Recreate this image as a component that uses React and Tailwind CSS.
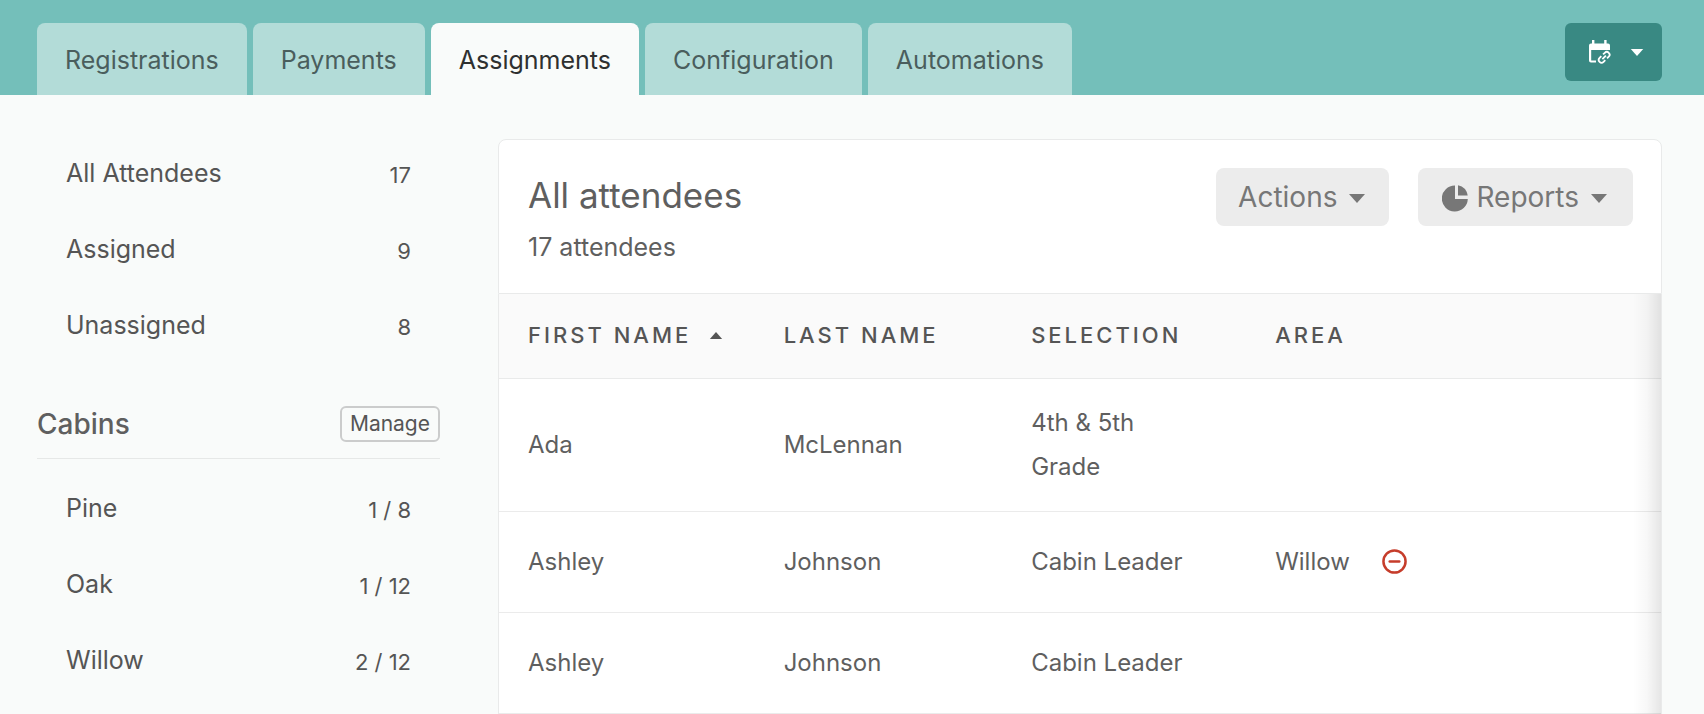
import React from 'react';

const tabs = ['Registrations', 'Payments', 'Assignments', 'Configuration', 'Automations'];

const groups = [
  { name: 'All Attendees', count: '17' },
  { name: 'Assigned', count: '9' },
  { name: 'Unassigned', count: '8' },
];

const cabins = [
  { name: 'Pine', count: '1 / 8' },
  { name: 'Oak', count: '1 / 12' },
  { name: 'Willow', count: '2 / 12' },
];

const attendees = [
  { first: 'Ada', last: 'McLennan', selection: '4th & 5th Grade', area: '' },
  { first: 'Ashley', last: 'Johnson', selection: 'Cabin Leader', area: 'Willow' },
  { first: 'Ashley', last: 'Johnson', selection: 'Cabin Leader', area: '' },
];

function CaretDown({ className }) {
  return (
    <svg viewBox="0 0 16 9" className={className} fill="currentColor" aria-hidden="true">
      <path d="M0 0h16L8 9z" />
    </svg>
  );
}

function CaretUp({ className }) {
  return (
    <svg viewBox="0 0 14 8" className={className} fill="currentColor" aria-hidden="true">
      <path d="M0 8h14L7 0z" />
    </svg>
  );
}

function PieIcon() {
  return (
    <svg viewBox="0 0 26 27" className="h-[27px] w-[26px]" fill="currentColor" aria-hidden="true">
      <path d="M13 .5A13 13 0 1 0 25.8 14H13z" />
      <path d="M16 .3v10.2h9.7A12.5 12.5 0 0 0 16 .3z" />
    </svg>
  );
}

function CalendarLinkIcon() {
  return (
    <svg viewBox="0 0 22 24" className="h-6 w-[22px]" fill="none" stroke="currentColor" aria-hidden="true">
      <path d="M3 0h2.4v3.4h9.8V0h2.4v3.4H19a2 2 0 0 1 2 2V10H2.2v10.6H7v2H2a2 2 0 0 1-2-2V5.4a2 2 0 0 1 2-2h1z" fill="currentColor" stroke="none" />
      <g strokeWidth="1.8" transform="rotate(-45 15 17.5)">
        <path d="M14 14.7h-2.4a2.8 2.8 0 0 0 0 5.6H14" />
        <path d="M16.5 14.7h2.4a2.8 2.8 0 0 1 0 5.6h-2.4" />
        <path d="M12.7 17.5h5" />
      </g>
    </svg>
  );
}

function MinusCircleIcon() {
  return (
    <svg viewBox="0 0 26 26" className="size-[25px]" fill="none" stroke="currentColor" strokeWidth="2.6" aria-hidden="true">
      <circle cx="13" cy="13" r="11.5" />
      <path d="M8 13h10" strokeLinecap="round" />
    </svg>
  );
}

function NavList({ items, label }) {
  return (
    <nav aria-label={label}>
      <ul>
        {items.map((item) => (
          <li key={item.name}>
            <a href="#" className="flex h-[76px] items-center justify-between px-[29px] text-[25px] text-[#555]">
              <span>{item.name}</span>
              <span className="pt-1 text-[22px]">{item.count}</span>
            </a>
          </li>
        ))}
      </ul>
    </nav>
  );
}

export default function App() {
  return (
    <div className="min-h-screen bg-[#f9fbfa] font-['Inter',sans-serif] text-2xl text-[#5f5f5f]">
      <header className="flex items-start justify-between bg-[#74bfba] pt-[23px] pr-[42px] pl-[37px]">
        <nav aria-label="Sections" className="flex gap-1.5 text-[25px]">
          {tabs.map((tab) => (
            <a
              key={tab}
              href="#"
              aria-current={tab === 'Assignments' ? 'page' : undefined}
              className={
                tab === 'Assignments'
                  ? 'flex h-[72px] items-center rounded-t-lg bg-[#f9fbfa] px-7 pt-1 text-[#2e3030]'
                  : 'flex h-[72px] items-center rounded-t-lg bg-[#b3dcd8] px-7 pt-1 text-[#4a5e5d]'
              }
            >
              {tab}
            </a>
          ))}
        </nav>
        <button type="button" aria-label="Event links" className="flex h-[58px] items-center gap-[19px] rounded-md bg-[#398983] pr-[18px] pl-6 text-white">
          <CalendarLinkIcon />
          <CaretDown className="h-[7px] w-[14px]" />
        </button>
      </header>

      <div className="flex items-start gap-[58px] pr-[42px] pl-[37px]">
        <aside className="w-[403px] shrink-0 pt-[41px]">
          <NavList items={groups} label="Attendees" />
          <div className="mt-[42px] flex h-[53px] items-start justify-between border-b border-[#e6e8e7]">
            <h2 className="text-[28px] leading-9 font-medium">Cabins</h2>
            <button type="button" className="h-9 rounded-md border-2 border-[#cbcccc] px-2 text-[21px] leading-8 text-[#555]">
              Manage
            </button>
          </div>
          <div className="pt-3">
            <NavList items={cabins} label="Cabins" />
          </div>
        </aside>

        <main className="mt-11 min-w-0 flex-1">
          <div className="flex items-start justify-between rounded-t-lg border border-[#e9eaea] bg-white pt-7 pr-7 pb-[26px] pl-[29px]">
            <div>
              <h1 className="text-[35px] leading-[54px]">All attendees</h1>
              <p className="pt-[5px] text-[25px] leading-10">17 attendees</p>
            </div>
            <div className="flex gap-[29px] text-[28px] text-[#777]">
              <button type="button" className="flex h-[58px] items-center gap-3 rounded-lg bg-[#ececec] pt-0.5 pr-6 pl-[22px]">
                Actions
                <CaretDown className="h-[9px] w-4" />
              </button>
              <button type="button" className="flex h-[58px] items-center rounded-lg bg-[#ececec] pt-0.5 pr-[26px] pl-6">
                <PieIcon />
                <span className="pr-3 pl-2">Reports</span>
                <CaretDown className="h-[9px] w-4" />
              </button>
            </div>
          </div>

          <div className="relative border-x border-[#e9eaea] bg-white">
            <table className="w-full table-fixed text-left">
              <colgroup>
                <col className="w-[22%]" />
                <col className="w-[21.3%]" />
                <col className="w-[21%]" />
                <col />
              </colgroup>
              <thead className="bg-[#fafafa] text-[22px] tracking-[3px] text-[#555] uppercase">
                <tr className="h-[84px] border-b border-[#e9eaea]">
                  <th className="pl-[29px] font-medium" aria-sort="ascending">
                    <span className="flex items-center gap-[18px]">
                      First name
                      <CaretUp className="h-[7px] w-[14px]" />
                    </span>
                  </th>
                  <th className="pl-[29px] font-medium">Last name</th>
                  <th className="pl-[29px] font-medium">Selection</th>
                  <th className="pl-[29px] font-medium">Area</th>
                </tr>
              </thead>
              <tbody className="leading-[44px]">
                {attendees.map((a, i) => (
                  <tr key={i} className="h-[101px] border-b border-[#ebebeb]">
                    <td className="py-[22px] pl-[29px]">{a.first}</td>
                    <td className="py-[22px] pl-[29px]">{a.last}</td>
                    <td className="py-[22px] pr-12 pl-[29px]">{a.selection}</td>
                    <td className="py-[22px] pl-[29px]">
                      {a.area && (
                        <span className="flex items-center gap-8">
                          {a.area}
                          <button type="button" aria-label="Remove from Willow" className="text-[#c63d2b]">
                            <MinusCircleIcon />
                          </button>
                        </span>
                      )}
                    </td>
                  </tr>
                ))}
              </tbody>
            </table>
            <div className="pointer-events-none absolute inset-y-0 right-0 w-7 bg-linear-to-r from-black/0 via-black/3 to-black/10" />
          </div>
        </main>
      </div>
    </div>
  );
}
